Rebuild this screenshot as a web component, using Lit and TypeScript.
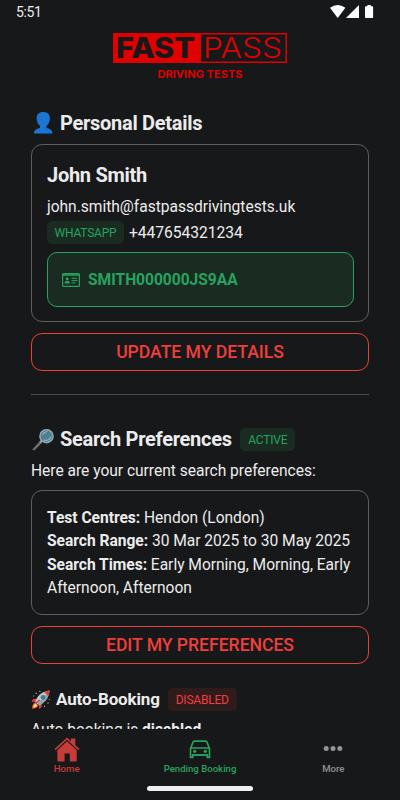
import { LitElement, html, css, svg } from "lit";
import { customElement } from "lit/decorators.js";

const person = svg`<svg class="emoji" width="22" height="24" viewBox="0 0 22 24">
  <path d="M2 22.600c0-3.700 2.300-4.700 6-5.600v-2C6 13 4.600 10.500 4.600 7.200 4.600 3.200 7 1 11.200 1s6.700 2.200 6.700 6.200c0 3.300-1.400 5.800-3.400 7.800v2c3.700.9 6 1.900 6 5.600z" fill="#1976d2"/>
</svg>`;

const lens = svg`<svg class="emoji" width="23" height="23" viewBox="0 0 23 23">
  <path d="M1 21.300 8.400 13l2 2L3.600 21.800c-1.200.9-2.800.6-2.600-.5z" fill="#6f6f6f"/>
  <path d="M8 13.500l2.600-2.700 1.700 1.600-2.700 2.600z" fill="#a5a5a5"/>
  <circle cx="15" cy="8.200" r="6.600" fill="#4d8096" stroke="#9fa8ad" stroke-width="1.400"/>
  <path d="M10.700 7.500c.7-3 3.200-4.500 6-3.800-2 .1-4.400 1.400-6 3.800z" fill="#a9d6e8"/>
  <path d="M12 11.700c2.500 1.600 6.500.5 7.600-3" stroke="#79b4ca" stroke-width="1.300" fill="none"/>
</svg>`;

const rocket = svg`<svg class="emoji" width="20" height="21" viewBox="0 0 20 21">
  <path d="M6.300 10 2.700 9.800C1.600 10.500.8 11.800.6 13l4.200-.6zM10.600 14.300l.2 3.300c-.7 1.200-1.600 2-2.900 2.400l.3-4.300z" fill="#e53935"/>
  <path d="M4.200 13.300C2.200 14 .8 16.800.9 19.700c2.600.2 5.400-.7 6.300-3z" fill="#f44336"/>
  <path d="M4.600 14.500c-1.500.6-2.300 2.300-2.300 4 1.600.1 3.400-.6 4-2z" fill="#ffee58"/>
  <path d="M4.300 13C6 8 9.600 3 18.600 1.600 18 10 13 14.500 8 16.800z" fill="#90a4ae"/>
  <path d="M4.300 13C6 8 9.600 3 18.600 1.600L6.300 15z" fill="#b9cbd3"/>
  <path d="M13.300 3.200c1.600-.8 3.300-1.300 5.300-1.600-.1 2-.5 3.800-1.200 5.400z" fill="#e53935"/>
  <circle cx="12" cy="8.300" r="2" fill="#3f7b96" stroke="#546e7a" stroke-width=".8"/>
  <path d="M5.300 13.800 8.800 11" stroke="#d32f2f" stroke-width="1.300"/>
  <path d="M4.600 4.300h1.200M8.400 2.300h1M2.300 7h.8M16.400 14h1.200M13 17.300h1M18.300 10.600h.8" stroke="#cfd8dc" stroke-width="1"/>
</svg>`;

@customElement("app-root")
export class AppRoot extends LitElement {
  static styles = css`
    :host {
      display: flex;
      flex-direction: column;
      height: 800px;
      overflow: hidden;
      background: #17181a;
      color: #ececec;
      font-family: Roboto, "Noto Sans", sans-serif;
      font-size: 15.600px;
      letter-spacing: -.03px;
    }
    svg { display: block; flex: none; }
    .status {
      height: 24px;
      flex: none;
      display: flex;
      justify-content: space-between;
      padding: 0 26px 0 16px;
      font-size: 14px;
      letter-spacing: -.4px;
      line-height: 25px;
    }
    .logo { margin: 9px auto 0; letter-spacing: 0; }
    main {
      height: 705px;
      flex: none;
      overflow: hidden;
      display: flex;
      flex-direction: column;
    }
    .content { padding: 0 31px; margin-top: 30px; }
    h2, h3, p { margin: 0; white-space: nowrap; }
    h2, h3 { display: flex; align-items: center; height: 28px; font-weight: 700; }
    h2 { font-size: 20px; letter-spacing: -.28px; }
    h2 .emoji { width: 24px; margin-right: 5px; }
    h3 { font-size: 17px; letter-spacing: -.15px; height: 24px; margin-top: 23px; }
    h3 .emoji { margin-right: 5px; }
    .card {
      box-sizing: border-box;
      border: 1px solid #5b5d5e;
      border-radius: 11px;
      padding: 16px 14.500px 15px 15px;
    }
    .details { height: 178px; margin-top: 7px; }
    .name { font-size: 20px; letter-spacing: -.28px; font-weight: 700; line-height: 28px; }
    .email { line-height: 24px; margin-top: 6px; }
    .phone { display: flex; align-items: center; gap: 5px; height: 24px; margin-top: 2px; }
    .phone .badge { margin-top: -1px; }
    .badge {
      box-sizing: border-box;
      height: 23px;
      border-radius: 5px;
      font-size: 12px;
      letter-spacing: -.2px;
      font-weight: 400;
      line-height: 24px;
      text-align: center;
      background: #1a2b21;
      color: #27a35f;
    }
    .badge.wa { width: 77px; }
    .badge.active { width: 55px; margin-left: 8.500px; }
    .badge.off { width: 69px; margin-left: 8px; background: #301b1c; color: #ef3f3b; }
    .licence {
      box-sizing: border-box;
      display: flex;
      align-items: center;
      gap: 8px;
      height: 55px;
      margin-top: 7px;
      padding-left: 14px;
      border: 1px solid #27a35f;
      border-radius: 10px;
      background: #1a2b21;
      color: #27a35f;
      font-weight: 700;
    }
    .button {
      box-sizing: border-box;
      height: 38px;
      margin-top: 11px;
      border: 1px solid #ef3f3b;
      border-radius: 11px;
      color: #ef3f3b;
      font-size: 17.600px;
      font-weight: 500;
      line-height: 37px;
      text-align: center;
    }
    .rule { height: 1px; background: #4b4c4e; margin: 23px 0 30px; }
    .intro { line-height: 24px; margin-top: 6px; }
    .prefs { height: 125px; margin-top: 7px; line-height: 23.400px; white-space: nowrap; }
    .auto { line-height: 24px; margin-top: 7px; }
    nav { display: flex; height: 50px; flex: none; letter-spacing: 0; }
    .tab {
      width: 133.330px;
      display: flex;
      flex-direction: column;
      align-items: center;
      font-size: 9.600px;
      font-weight: 500;
      line-height: 12px;
    }
    .tab svg { height: 34px; }
    .home { color: #c53c38; }
    .pending { color: #27a35f; }
    .more { color: #929394; }
    .handle { width: 106px; height: 5px; border-radius: 3px; background: #efefef; margin: 7px auto 0; flex: none; }
  `;

  render() {
    return html`
      <div class="status">
        <span>5:51</span>
        <svg width="44" height="24" viewBox="0 0 44 24" fill="#fff">
          <path d="M0 7.800Q7.700 2.200 15.400 7.800L7.700 18z" />
          <path d="M29 5v13H16z" />
          <path d="M35 7q0-.8.8-.8h1.600V5h3.400v1.200h1.500q.8 0 .8.8v10.200q0 .8-.8.800h-6.500q-.8 0-.8-.8z" />
        </svg>
      </div>
      <main>
        <svg class="logo" width="174" height="46" viewBox="0 0 174 46" font-family="Inter, sans-serif">
          <rect width="174" height="30" fill="#df0000" />
          <rect x="88" y="1.500" width="84.500" height="27" fill="#17181a" />
          <text x="3" y="25" font-size="28" font-weight="800" fill="#17181a" textLength="79" lengthAdjust="spacingAndGlyphs">FAST</text>
          <text x="90" y="25" font-size="28" font-weight="300" fill="#df0000" textLength="79" lengthAdjust="spacingAndGlyphs">PASS</text>
          <text x="44.500" y="44.500" font-size="11" font-weight="700" fill="#df0000" textLength="85" lengthAdjust="spacingAndGlyphs">DRIVING TESTS</text>
        </svg>
        <div class="content">
          <h2>${person}Personal Details</h2>
          <div class="card details">
            <p class="name">John Smith</p>
            <p class="email">john.smith@fastpassdrivingtests.uk</p>
            <div class="phone"><span class="badge wa">WHATSAPP</span><span>+447654321234</span></div>
            <div class="licence">
              <svg width="18" height="14" viewBox="0 0 18 14" fill="none" stroke="currentColor">
                <rect x=".6" y=".6" width="16.800" height="12.800" rx="1" stroke-width="1.200" />
                <path d="M1 2h16" stroke-width="1.600" />
                <circle cx="5.200" cy="5.800" r="1.500" fill="currentColor" stroke="none" />
                <path d="M2.500 10.500q0-2.700 2.700-2.700t2.700 2.700z" fill="currentColor" stroke="none" />
                <path d="M9.500 5.300h6M9.500 7.600h6M9.500 9.900h4" stroke-width="1" />
              </svg>
              <span>SMITH000000JS9AA</span>
            </div>
          </div>
          <div class="button">UPDATE MY DETAILS</div>
          <div class="rule"></div>
          <h2>${lens}Search Preferences<span class="badge active">ACTIVE</span></h2>
          <p class="intro">Here are your current search preferences:</p>
          <div class="card prefs">
            <b>Test Centres:</b> Hendon (London)<br />
            <b>Search Range:</b> 30 Mar 2025 to 30 May 2025<br />
            <b>Search Times:</b> Early Morning, Morning, Early<br />
            Afternoon, Afternoon
          </div>
          <div class="button">EDIT MY PREFERENCES</div>
          <h3>${rocket}Auto-Booking<span class="badge off">DISABLED</span></h3>
          <p class="auto">Auto booking is <b>disabled</b>.</p>
        </div>
      </main>
      <nav>
        <div class="tab home">
          <svg width="26" height="34" viewBox="0 0 26 34" fill="currentColor">
            <path d="M.5 20 13 8.500l4 3.700V9.500h4.300v6.600l4.200 3.900-1.100 1.200L13 10.800 1.600 21.200z" />
            <path d="M13 12.300l9.700 8.900v10.200q0 1.100-1.100 1.100h-5.800v-8h-5.200v8H4.400q-1.100 0-1.100-1.100V21.200z" />
          </svg>
          <span>Home</span>
        </div>
        <div class="tab pending">
          <svg width="22" height="34" viewBox="0 0 22 34" fill="none" stroke="currentColor">
            <path d="M1.500 19.500 4 13.200q.4-1 1.500-1h11q1.100 0 1.500 1l2.500 6.300v8.900h-2.200v-2.300H3.700v2.300H1.500z" stroke-width="1.700" stroke-linejoin="round" />
            <path d="M2 19h18M3 26h16" stroke-width="1.600" />
            <circle cx="5.700" cy="22.300" r="1.600" fill="currentColor" stroke="none" />
            <circle cx="16.300" cy="22.300" r="1.600" fill="currentColor" stroke="none" />
          </svg>
          <span>Pending Booking</span>
        </div>
        <div class="tab more">
          <svg width="20" height="34" viewBox="0 0 20 34" fill="currentColor">
            <circle cx="3.200" cy="19.500" r="2.500" /><circle cx="10" cy="19.500" r="2.500" /><circle cx="16.800" cy="19.500" r="2.500" />
          </svg>
          <span>More</span>
        </div>
      </nav>
      <div class="handle"></div>
    `;
  }
}
